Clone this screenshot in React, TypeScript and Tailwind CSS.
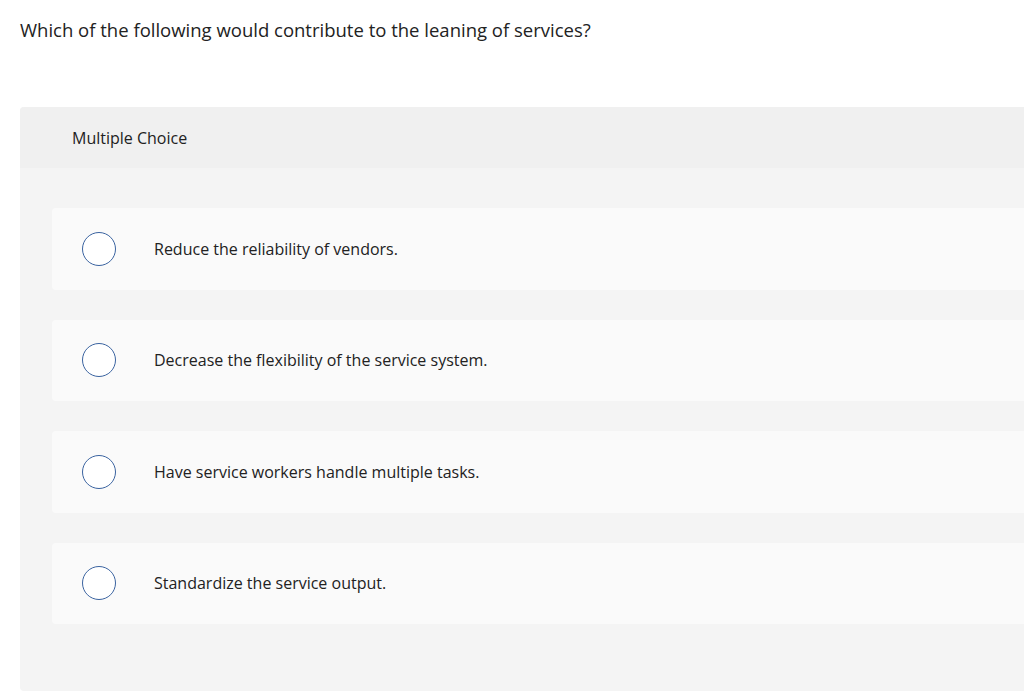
const options = [
  'Reduce the reliability of vendors.',
  'Decrease the flexibility of the service system.',
  'Have service workers handle multiple tasks.',
  'Standardize the service output.',
];

export default function App() {
  return (
    <div
      className="w-[1024px] h-[700px] overflow-hidden bg-white text-[#222]"
      style={{ fontFamily: '"Open Sans", sans-serif' }}
    >
      <div className="pl-5 pt-[18px] text-[18.5px] leading-6">
        Which of the following would contribute to the leaning of services?
      </div>

      <div className="ml-5 mt-[65px] w-[1040px] rounded-[4px] bg-[#f4f4f4] pb-[67px]">
        <div className="h-[61px] rounded-t-[4px] bg-[#f0f0f0] pl-[52px] flex items-center text-[16px]">
          Multiple Choice
        </div>
        <div className="pl-8 pt-10 flex flex-col gap-[30px]">
          {options.map((opt) => (
            <div
              key={opt}
              className="h-[81.5px] rounded-[4px] bg-[#fafafa] flex items-center"
            >
              <div className="ml-[30px] w-[34px] h-[34px] rounded-full border-[1.5px] border-[#3a63a0] bg-white" />
              <div className="ml-[38px] text-[16px]">{opt}</div>
            </div>
          ))}
        </div>
      </div>
    </div>
  );
}
